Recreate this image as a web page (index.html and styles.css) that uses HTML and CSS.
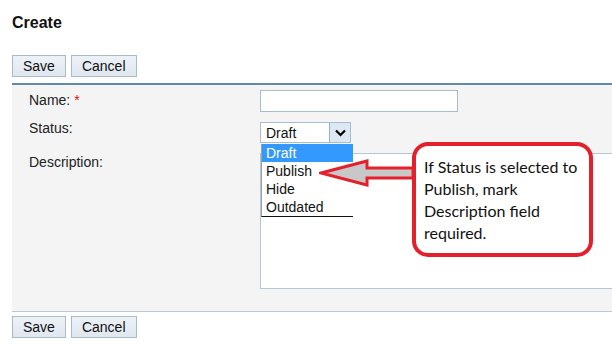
FILE: index.html
```html
<!DOCTYPE html>
<html lang="en">
<head>
  <meta charset="UTF-8">
  <title>Create</title>
  <link rel="stylesheet" href="styles.css">
</head>
<body>

  <h1 class="page-title">Create</h1>

  <div class="toolbar">
    <button class="btn">Save</button>
    <button class="btn">Cancel</button>
  </div>

  <div class="form-panel">
    <div class="form-row row-name">
      <label>Name: <span class="req">*</span></label>
      <input class="text-input" type="text">
    </div>

    <div class="form-row row-status">
      <label>Status:</label>
      <div class="select-wrap">
        <div class="select">
          <span class="select-value">Draft</span>
          <span class="select-btn">
            <svg width="11" height="8" viewBox="0 0 11 8"><path d="M1 1.5 L5.5 6 L10 1.5" fill="none" stroke="#000" stroke-width="2.2"/></svg>
          </span>
        </div>
        <ul class="dropdown">
          <li class="active">Draft</li>
          <li>Publish</li>
          <li>Hide</li>
          <li>Outdated</li>
        </ul>
      </div>
    </div>

    <div class="form-row row-desc">
      <label>Description:</label>
      <textarea class="text-area"></textarea>
    </div>

    <!-- annotation drawn over the form -->
    <svg class="note-arrow" width="96" height="32" viewBox="0 0 96 32">
      <polygon points="2,15 48,3 48,10 94,10 94,20 48,20 48,27" fill="#c8c8c8" stroke="#e3202b" stroke-width="3" stroke-linejoin="miter"/>
    </svg>
    <div class="note">If Status is selected to Publish, mark Description field required.</div>
  </div>

  <div class="toolbar toolbar-bottom">
    <button class="btn">Save</button>
    <button class="btn">Cancel</button>
  </div>

</body>
</html>
```

FILE: styles.css
```css
* {
  margin: 0;
  padding: 0;
  box-sizing: border-box;
}

html, body {
  overflow: hidden;
}

body {
  font-family: 'Liberation Sans', Arial, sans-serif;
  font-size: 14px;
  color: #222;
  background: #fff;
}

.page-title {
  font-size: 16px;
  line-height: 18px;
  font-weight: bold;
  color: #111;
  margin: 14px 0 0 12px;
}

.toolbar {
  display: flex;
  gap: 5px;
  margin: 23px 0 0 12px;
}

.toolbar-bottom {
  margin-top: 4px;
}

.btn {
  height: 22px;
  padding: 0 10px;
  font-family: 'Liberation Sans', Arial, sans-serif;
  font-size: 14px;
  color: #111;
  background: linear-gradient(#edf2f7, #dfe7ef);
  border: 1px solid #a9bacb;
}

.form-panel {
  position: relative;
  overflow: hidden;
  margin: 6px 0 0 12px;
  padding: 5px 0 22px 17px;
  background: #f4f4f4;
  border-top: 2px solid #5f88a9;
  border-bottom: 1px solid #b9c8d6;
  display: flex;
  flex-direction: column;
  gap: 10px;
}

.form-row {
  display: grid;
  grid-template-columns: 231px 1fr;
  align-items: start;
}

.form-row label {
  line-height: 16px;
  color: #222;
}

.row-name label {
  padding-top: 2px;
}

.row-status label {
  margin-top: -2px;
}

.row-desc label {
  padding-top: 1px;
}

.req {
  color: #d31414;
}

.text-input {
  width: 198px;
  height: 22px;
  background: #fff;
  border: 1px solid #a8bdd2;
}

.select-wrap {
  position: relative;
  width: 91px;
}

.select {
  display: flex;
  justify-content: space-between;
  height: 21px;
  background: #fff;
  border: 1px solid #a8bdd2;
}

.select-value {
  padding: 2px 0 0 5px;
  line-height: 16px;
  color: #111;
}

.select-btn {
  width: 21px;
  display: flex;
  align-items: center;
  justify-content: center;
  background: #dce8f4;
  border-left: 1px solid #97b1ca;
}

.dropdown {
  position: absolute;
  top: 22px;
  left: 1px;
  width: 92px;
  list-style: none;
  background: #fff;
  border-left: 1px solid #a0a0a0;
  border-bottom: 1px solid #111;
  z-index: 2;
}

.dropdown li {
  height: 18px;
  line-height: 18px;
  padding-left: 4px;
  color: #111;
}

.dropdown li.active {
  background: #3399ff;
  color: #fff;
}

.text-area {
  width: 380px;
  height: 136px;
  resize: none;
  background: #fff;
  border: 1px solid #b6c6d6;
}

.note-arrow {
  position: absolute;
  left: 307px;
  top: 73px;
  z-index: 3;
}

.note {
  position: absolute;
  left: 400px;
  top: 57px;
  width: 181px;
  height: 115px;
  padding: 10px 8px 0 8px;
  font-family: Lato, 'Open Sans', sans-serif;
  font-size: 16px;
  line-height: 22px;
  color: #111;
  background: #fff;
  border: 4px solid #e3202b;
  border-radius: 16px;
  z-index: 3;
}
```
